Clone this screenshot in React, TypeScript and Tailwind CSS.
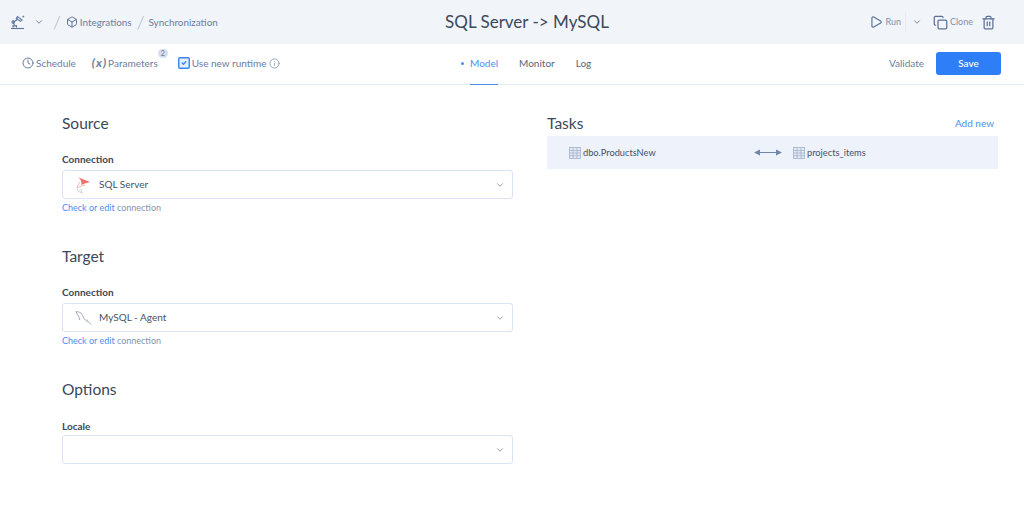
import { ChevronDown, Clock, Copy, Info, Play, SquareCheck, Trash2, Box } from "lucide-react";

const FONT = "font-['Lato','Noto_Sans',sans-serif]";

function LampIcon() {
  return (
    <svg width="16" height="16" viewBox="0 0 16 16" fill="none" stroke="#5d7299" strokeWidth="1.1" className="shrink-0">
      <path d="M1 14.500h13" />
      <path d="M3 13.500v-1.600h3.500v1.600" />
      <path d="M4.500 11.500 3.200 8.200l5-3.200" />
      <circle cx="3.200" cy="8" r="1.200" />
      <path d="m7.500 2.600 4.600 3.400-1.600 1.400-4.200-3z" />
      <path d="M12.500 3.200 14 2" />
    </svg>
  );
}

function TableIcon() {
  return (
    <svg width="12" height="12" viewBox="0 0 12 12" fill="none" stroke="#a4b3cc" strokeWidth="0.8" className="shrink-0">
      <rect x="0.500" y="0.500" width="11" height="11" fill="#e3e9f5" />
      <path d="M0.500 3.500h11M0.500 6h11M0.500 8.700h11M4 0.500v11M8 0.500v11" />
    </svg>
  );
}

function SqlServerIcon() {
  return (
    <svg width="16" height="18" viewBox="0 0 16 18" fill="none" className="shrink-0">
      <path d="M3 1c3 1.500 8 3.500 12 5-3 .5-6 1.500-9 3 1-2 .5-5-3-8z" fill="#e8756d" />
      <path d="M5 6c-1.500 2-2.500 4-3 6 2-1 5-2.500 8-3" stroke="#f2aaa5" strokeWidth="0.9" />
      <path d="M2 13c1 2 3 3.500 5 4-.5-1.500-1-2.500-1-4.500" stroke="#d3d7de" strokeWidth="1.100" />
    </svg>
  );
}

function MySqlIcon() {
  return (
    <svg width="17" height="16" viewBox="0 0 17 16" fill="none" stroke="#9aa5b5" strokeWidth="0.9" className="shrink-0">
      <path d="M1 1.500c1.500.5 3.500.3 5 1.500 1.500 1.300 2 3.500 3 5.500.8 1.500 2.500 2.500 3.500 3.500" />
      <path d="M1 1.500c.5 2 1.500 3 2.500 4.500.7 1 1 2.500 1 4" />
      <path d="M12 9.500c.5 1.500 2 3 4 5" />
    </svg>
  );
}

function ConnectionField({ icon, value }: { icon: React.ReactNode; value: string }) {
  return (
    <>
      <label className="mt-[15px] block text-[10px] leading-[18px] font-bold text-[#3c4858]">Connection</label>
      <div className="mt-[2px] flex h-[29px] items-center rounded-[3px] border border-[#d9e3f5] bg-white pr-[7px] pl-[12px]">
        <span className="flex w-[24px] shrink-0 items-center">{icon}</span>
        <span className="flex-1 text-[10px] text-[#465264]">{value}</span>
        <ChevronDown size={10} className="text-[#7f8ea8]" />
      </div>
      <p className="mt-[1px] text-[9px] leading-[15px] text-[#8493ad]">
        <span className="text-[#4d8dee]">Check or edit</span> connection
      </p>
    </>
  );
}

export default function App() {
  return (
    <div className={`${FONT} h-[522px] w-[1024px] overflow-hidden bg-white`}>
      <header className="flex h-[44px] items-center bg-[#f1f4f9] pr-[28px] pl-[10px]">
        <div className="flex w-[400px] items-center text-[9.900px] text-[#6a7d9e]">
          <LampIcon />
          <ChevronDown size={10} className="ml-[8px] text-[#5d7299]" />
          <span className="mr-[5px] ml-[9px] text-lg leading-none font-light text-[#a9b6cc]">/</span>
          <Box size={12} className="mr-[2px] text-[#5d7299]" />
          <span>Integrations</span>
          <span className="mr-[4px] ml-[5px] text-lg leading-none font-light text-[#a9b6cc]">/</span>
          <span>Synchronization</span>
        </div>
        <h1 className="w-[234px] text-center text-[17px] whitespace-nowrap text-[#3c4858]">SQL Server -&gt; MySQL</h1>
        <div className="ml-auto flex items-center text-[9px] text-[#8290a8]">
          <Play size={14} className="mr-[2px] text-[#5d7299]" />
          <span>Run</span>
          <span className="ml-[4px] h-[20px] w-px bg-[#e6eaf2]" />
          <ChevronDown size={10} className="ml-[6px] text-[#5d7299]" />
          <Copy size={15} className="mr-[2px] ml-[11px] text-[#5d7299]" />
          <span>Clone</span>
          <Trash2 size={15} className="ml-[8px] text-[#5d7299]" />
        </div>
      </header>

      <nav className="flex h-[41px] items-center border-b border-[#e4ebf7] pr-[23px] pl-[22px] text-[10px] text-[#6a7d9e]">
        <div className="mb-[2px] flex w-[428px] items-center">
          <Clock size={12} className="mr-[2px]" />
          <span>Schedule</span>
          <span className="mr-[1px] ml-[16px] text-xs font-bold tracking-[1px] italic">(x)</span>
          <span className="relative">
            Parameters
            <span className="absolute top-[-7px] right-[-10px] flex h-[9px] w-[10px] items-center justify-center rounded-full bg-[#d5deec] text-[7px] leading-none">2</span>
          </span>
          <SquareCheck size={14} strokeWidth={2.5} className="mr-[1px] ml-[19px] fill-[#e3eeff] text-[#3f86ee]" />
          <span>Use new runtime</span>
          <Info size={11} className="ml-[3px] text-[#8fa0ba]" />
        </div>
        <div className="flex h-full items-center text-[10px]">
          <span className="mr-[6px] mb-[2px] ml-[11px] h-[3px] w-[3px] rounded-full bg-[#4d8dee]" />
          <span className="flex h-full items-center border-b border-[#4d8dee] pb-[2px] text-[#4d8dee] [margin-bottom:-1px]">Model</span>
          <span className="mb-[2px] ml-[21px] text-[#5a6678]">Monitor</span>
          <span className="mb-[2px] ml-[21px] text-[#5a6678]">Log</span>
        </div>
        <span className="mb-[2px] ml-auto text-[#6a7d9e]">Validate</span>
        <button type="button" className="mb-[1px] ml-[12px] h-[23px] w-[65px] rounded-[3px] bg-[#2e7ff7] pb-[1px] text-[10px] font-medium text-white">
          Save
        </button>
      </nav>

      <main className="flex pt-[26px] pr-[26px] pl-[62px]">
        <section className="w-[451px]">
          <h2 className="text-[15.500px] leading-[24px] text-[#3c4858]">Source</h2>
          <ConnectionField icon={<SqlServerIcon />} value="SQL Server" />

          <h2 className="mt-[29px] text-[15.500px] leading-[24px] text-[#3c4858]">Target</h2>
          <ConnectionField icon={<MySqlIcon />} value="MySQL - Agent" />

          <h2 className="mt-[29px] text-[15.500px] leading-[24px] text-[#3c4858]">Options</h2>
          <label className="mt-[16px] block text-[10px] leading-[18px] font-bold text-[#3c4858]">Locale</label>
          <div className="flex h-[29px] items-center justify-end rounded-[3px] border border-[#d9e3f5] bg-white pr-[7px]">
            <ChevronDown size={10} className="text-[#7f8ea8]" />
          </div>
        </section>

        <section className="ml-[34px] flex-1">
          <div className="flex items-center justify-between pr-[4px]">
            <h2 className="text-[15.500px] leading-[24px] text-[#3c4858]">Tasks</h2>
            <span className="text-[10px] text-[#4d8dee]">Add new</span>
          </div>
          <div className="mt-[1px] flex h-[33px] items-center bg-[#eef3fb] pl-[22px] text-[9.250px] text-[#465264]">
            <TableIcon />
            <span className="ml-[2px] w-[171px]">dbo.ProductsNew</span>
            <svg width="28" height="7" viewBox="0 0 28 7" fill="#6f86ab" className="shrink-0">
              <path d="M0 3.500 6 .5v2.500h16V.5l6 3-6 3V4H6v2.500z" />
            </svg>
            <span className="ml-[11px]">
              <TableIcon />
            </span>
            <span className="ml-[2px]">projects_items</span>
          </div>
        </section>
      </main>
    </div>
  );
}
